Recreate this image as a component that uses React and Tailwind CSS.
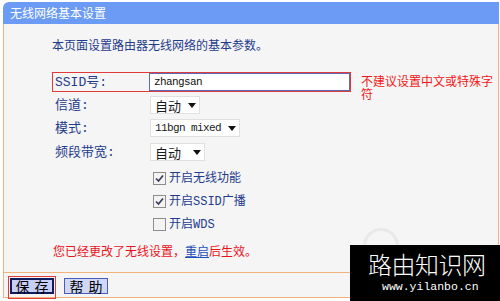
const cjk = "font-['Noto_Sans_CJK_SC',sans-serif]";
const mix = "font-['Liberation_Mono','Noto_Sans_CJK_SC',monospace]";

function Arrow() {
  return (
    <svg width="8" height="5" viewBox="0 0 8 5">
      <polygon points="0,0 8,0 4,5" fill="#111" />
    </svg>
  );
}

function Select({ value, width, ascii }) {
  return (
    <div
      className={`flex h-[18px] items-center justify-between border border-[#e0e0e0] bg-white pl-[4px] pr-[3px] text-[#1a1a1a] ${width}`}
    >
      <span
        className={
          ascii
            ? "font-['Liberation_Mono',monospace] text-[11px] leading-none tracking-[-0.6px]"
            : "font-['Noto_Sans_CJK_SC',sans-serif] text-[13px] leading-none"
        }
      >
        {value}
      </span>
      <Arrow />
    </div>
  );
}

function Check({ checked, label }) {
  return (
    <div className="flex h-[23px] items-center pl-[101px]">
      <span className="flex h-[13px] w-[13px] items-center justify-center border border-[#8d8d8d] bg-[#f3f3f3]">
        {checked && (
          <svg width="11" height="11" viewBox="0 0 11 11">
            <path d="M2 5.5 L4.5 8 L9 2.5" fill="none" stroke="#3a3d5c" strokeWidth="1.7" />
          </svg>
        )}
      </span>
      <span className={`ml-[3px] text-[12px] leading-none text-[#1f3b8c] ${mix}`}>{label}</span>
    </div>
  );
}

function Row({ label, children, mt }) {
  return (
    <div className={`flex h-[18px] items-center pl-[3px] ${mt}`}>
      <span className={`w-[95px] text-[13px] leading-none text-[#1f3b8c] ${mix}`}>{label}</span>
      {children}
    </div>
  );
}

export default function App() {
  return (
    <div className={`relative h-[301px] w-[500px] overflow-hidden bg-white ${cjk}`}>
      <div className="ml-[3px] mr-[1px] pt-[2px]">
        <div className="flex h-[22px] items-center rounded-tl-[6px] bg-[#6b9bf5] pl-[7px] text-[12px] leading-none text-white">
          无线网络基本设置
        </div>

        <div className="flex h-[248px] flex-col border-x border-[#f2b27a] bg-[#f5f5f5] pl-[48px] pt-[13px]">
          <p className="text-[12px] leading-[16px] text-[#1f3b8c]">本页面设置路由器无线网络的基本参数。</p>

          <div className="mt-[19px] flex h-[20px] items-start">
            <div className="flex h-[20px] w-[299px] items-center border border-[#e03a3a] pl-[2px]">
              <span className={`w-[94px] text-[13px] leading-none text-[#1f3b8c] ${mix}`}>SSID号:</span>
              <div className="flex h-[18px] w-[201px] items-center border border-[#5a6cb8] bg-white pl-[4px]">
                <span className="font-['Liberation_Mono',monospace] text-[11px] leading-none tracking-[-0.6px] text-[#111]">
                  zhangsan
                </span>
              </div>
            </div>
            <p className="ml-[10px] mt-[2px] w-[134px] text-[12px] leading-[13px] text-[#f01818]">
              不建议设置中文或特殊字符
            </p>
          </div>

          <Row label="信道:" mt="mt-[4px]">
            <Select value="自动" width="w-[50px]" />
          </Row>
          <Row label="模式:" mt="mt-[5px]">
            <Select value="11bgn mixed" width="w-[90px]" ascii />
          </Row>
          <Row label="频段带宽:" mt="mt-[6px]">
            <Select value="自动" width="w-[55px]" />
          </Row>

          <div className="mt-[6px]">
            <Check checked label="开启无线功能" />
            <Check checked label="开启SSID广播" />
            <Check label="开启WDS" />
          </div>

          <p className="mt-[7px] pl-[1px] text-[12px] leading-[16px] text-[#e8141c]">
            您已经更改了无线设置，
            <span className="text-[#1f4fb8] underline">重启</span>
            后生效。
          </p>
        </div>

        <div className="flex h-[26px] items-start gap-[8px] border-x border-y border-[#f2b27a] bg-[#f5f5f5] pl-[4px] pt-[3px]">
          <div className="h-[23px] w-[48px] border border-[#e03a3a] p-[1px]">
            <button className="flex h-[16px] w-[44px] items-center justify-center gap-[5px] border-2 border-[#101c5c] bg-[#c7cff5] text-[14px] leading-none text-black">
              <span>保</span>
              <span>存</span>
            </button>
          </div>
          <button className="mt-[2px] flex h-[16px] w-[44px] items-center justify-center gap-[5px] border border-[#4b5cb8] bg-[#d0d8f8] text-[14px] leading-none text-black">
            <span>帮</span>
            <span>助</span>
          </button>
        </div>
      </div>

      <div className="absolute left-[363px] top-[228px] h-[36px] w-[36px] rounded-full border-[3px] border-[#e9e9e9]" />
      <div className="absolute bottom-0 right-0 flex h-[56px] w-[150px] flex-col bg-black pl-[18px] pt-[8px]">
        <span className="text-[24px] font-light leading-[22px] tracking-[-0.5px] text-white">路由知识网</span>
        <span className="mt-[5px] pl-[14px] font-['Liberation_Mono',monospace] text-[11.5px] leading-[13px] text-white">
          www.yilanbo.cn
        </span>
      </div>
    </div>
  );
}
